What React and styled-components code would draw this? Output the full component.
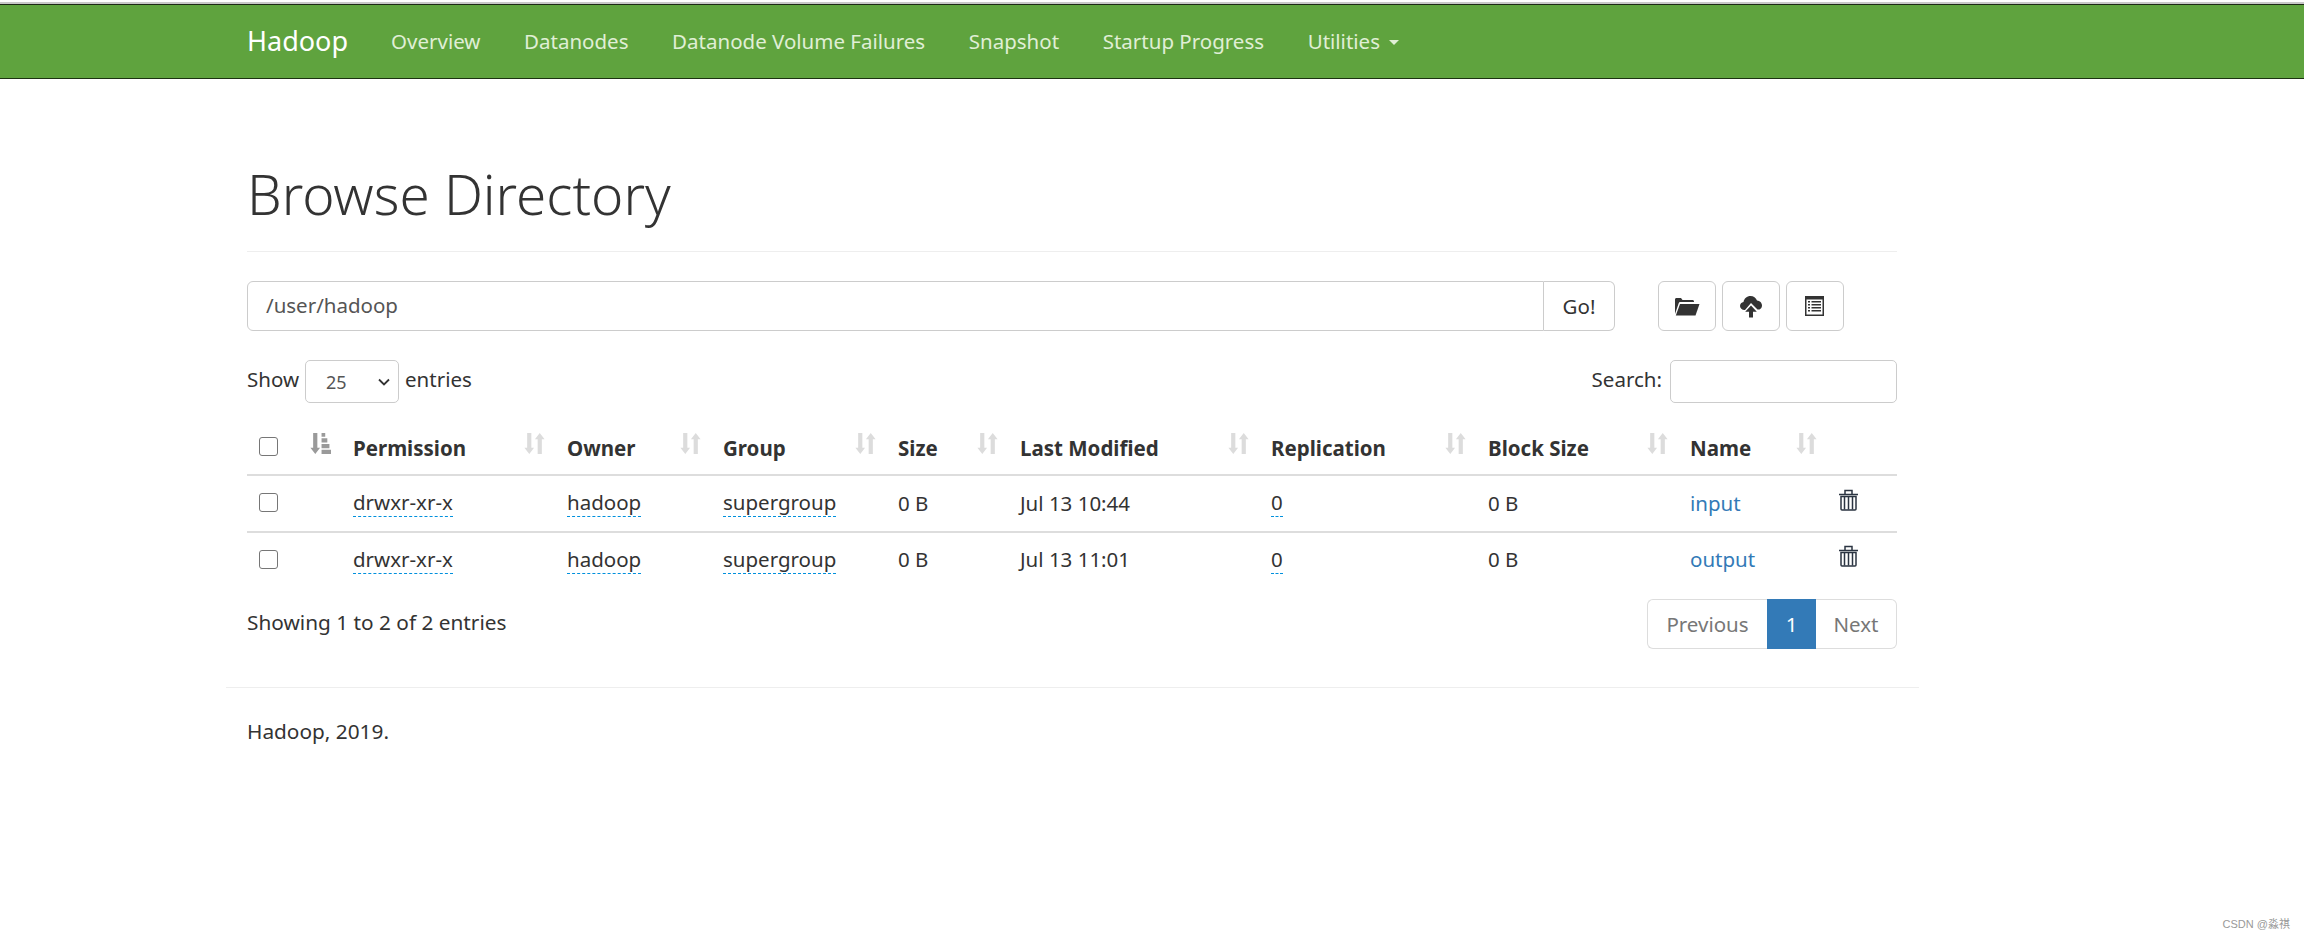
import React from 'react';
import styled, { createGlobalStyle } from 'styled-components';

const Global = createGlobalStyle`
  html, body { margin: 0; padding: 0; background: #fff; height: 100%; overflow: hidden; }
  body { font-family: "Noto Sans", "Open Sans", sans-serif; font-size: 20.500px; color: #333; }
  * { box-sizing: border-box; }
`;
const Page = styled.div`height: 939px; padding-top: 2px; position: relative;`;
const Navbar = styled.nav`
  height: 77px; background: #5fa33e; border-top: 2px solid #c8c8c8; position: relative;
  display: flex; align-items: stretch; padding-left: 247px;
  box-shadow: inset 0 1px 0 #1c2a14; border-bottom: 1px solid #1d3312;
`;
const Brand = styled.a`color: #fff; font-size: 27px; line-height: 74px; margin-right: 43px;`;
const NavLink = styled.a`
  color: #e0efd6; font-size: 20.500px; line-height: 72px; margin-right: 43.600px; display: flex; align-items: center; white-space: nowrap;
`;
const Caret = styled.span`
  display: inline-block; margin-left: 9px; margin-top: 3px; border-top: 5px solid #e0efd6;
  border-left: 5px solid transparent; border-right: 5px solid transparent;
`;
const Container = styled.main`margin-left: 226px; width: 1693px; padding: 0 22px 0 21px;`;
const Header = styled.div`height: 173px; border-bottom: 1px solid #eee; padding-top: 79px;`;
const Title = styled.h1`margin: 0; font-size: 54.800px; line-height: 72px; font-weight: 350; color: #333;`;
const Toolbar = styled.div`display: flex; margin-top: 29px; height: 50px;`;
const PathInput = styled.div`
  width: 1297px; height: 50px; border: 1.5px solid #ccc; border-radius: 6px 0 0 6px; padding-left: 18px;
  line-height: 47px; color: #555; font-size: 20.500px;
`;
const GoButton = styled.button`
  width: 71px; height: 50px; border: 1.5px solid #ccc; border-left: 0; border-radius: 0 6px 6px 0;
  background: #fff; font: inherit; color: #333; padding: 0;
`;
const IconButtons = styled.div`display: flex; gap: 6px; margin-left: 43px;`;
const IconButton = styled.button`
  width: 58px; height: 50px; border: 1.5px solid #ccc; border-radius: 6px; background: #fff; padding: 0;
  display: flex; align-items: center; justify-content: center;
`;
const Controls = styled.div`display: flex; justify-content: space-between; align-items: center; margin-top: 29px; height: 43px;`;
const Inline = styled.label`display: flex; align-items: center; gap: 6px; font-size: 20.500px; line-height: 24px; color: #333;`;
const InlineText = styled.span`margin-top: -5px;`;
const SelectBox = styled.div`
  width: 94px; height: 43px; border: 1.5px solid #ccc; border-radius: 5px; display: flex; align-items: center;
  justify-content: space-between; padding: 0 8px 0 20px; font-size: 18px; color: #555;
`;
const SearchBox = styled.div`width: 227px; height: 43px; border: 1.5px solid #ccc; border-radius: 5px; margin-left: 2px;`;
const Table = styled.table`width: 1650px; table-layout: fixed; border-collapse: collapse; margin-top: 16px;`;
const Col = styled.col`width: ${p => p.$w}px;`;
const Th = styled.th`
  height: 56px; border-bottom: 2px solid #ddd; padding: 13px 10.500px 0 12px; text-align: left; font-size: 20.500px; font-weight: 700; color: #333;
  vertical-align: top;
`;
const ThInner = styled.div`display: flex; justify-content: space-between; align-items: flex-start; line-height: 32px; white-space: nowrap;`;
const SortSvg = styled.svg`display: block; margin-top: 1px;`;
const Td = styled.td`
  height: 57px; border-bottom: 2px solid #ddd; padding: 0 12px 2px; font-size: 20.500px; color: #333; white-space: nowrap;
  tr:last-child > & { border-bottom: 0; padding-bottom: 4px; }
`;
const Editable = styled.span`border-bottom: 1.5px dashed #0090dd; display: inline-block; line-height: 27px;`;
const FileLink = styled.a`color: #337ab7;`;
const Check = styled.span`
  display: block; width: 19px; height: 19px; border: 1.5px solid #767676; border-radius: 3px; background: #fff;
`;
const HeadCheck = styled(Check)`margin-top: 5px;`;
const FooterRow = styled.div`display: flex; justify-content: space-between; align-items: flex-start; margin-top: 10px;`;
const Info = styled.div`margin-top: 9px; line-height: 28px; font-size: 20.800px;`;
const Pager = styled.div`display: flex; height: 50px; font-size: 20.500px;`;
const PageItem = styled.span`
  width: ${p => p.$w}px; display: flex; align-items: center; justify-content: center;
  color: ${p => p.$active ? '#fff' : '#777'}; background: ${p => p.$active ? '#337ab7' : '#fff'};
  border: ${p => p.$active ? '0' : '1.5px solid #ddd'};
  ${p => p.$first && 'border-radius: 6px 0 0 6px; border-right: 0;'}
  ${p => p.$last && 'border-radius: 0 6px 6px 0; border-left: 0;'}
`;
const FootRule = styled.hr`margin: 38px -22px 0 -21px; border: 0; border-top: 1.5px solid #eee;`;
const FootText = styled.p`margin: 29px 0 0; line-height: 28px; font-size: 20.800px;`;
const Watermark = styled.span`position: absolute; right: 14px; bottom: 8px; font-size: 11px; color: #999; font-family: "Liberation Sans", "Noto Sans CJK SC", sans-serif;`;
const TrashWrap = styled.svg`display: block; margin-top: -6px;`;

const Sort = ({ active }) => (
  <SortSvg width="21" height="21" viewBox="0 0 20 20" fill={active ? '#9a9a9a' : '#dcdcdc'}>
    {active ? (
      <>
        <path d="M3 0h4v14h2.600L5 20 .4 14H3z" />
        <path d="M11 0h3.500v3.500H11zM11 5h5.500v4H11zM11 10.500h7.500v4H11zM11 16h9v4h-9z" />
      </>
    ) : (
      <>
        <path d="M3 0h4v14h2.600L5 20 .4 14H3z" />
        <path d="M13 20v-14h-2.600L15 0l4.600 6H17v14z" />
      </>
    )}
  </SortSvg>
);
const FolderIcon = () => (
  <svg width="26" height="20" viewBox="0 0 26 20" fill="#333">
    <path d="M1 18V3.500C1 2.600 1.600 2 2.500 2H7l1.500 2H18.500C19.400 4 20 4.600 20 5.500V6H6.500C5.600 6 5 6.500 4.700 7.300Z" />
    <path d="M6 8h19.500L21.500 19.500H1.800Z" />
  </svg>
);
const CloudIcon = () => (
  <svg width="22" height="23" viewBox="0 0 22 23" fill="#333">
    <path d="M5 15H4.500C2 15 0 13.200 0 11c0-2 1.500-3.600 3.500-3.900C4 3.500 7 1 10.500 1c3 0 5.500 1.800 6.500 4.500 2.800.2 5 2.400 5 5 0 1.800-1 3.300-2.500 4H17.500L11 8Z" />
    <path d="M11 10.500 16.800 16.800H13V22.500H9V16.800H5.200Z" />
  </svg>
);
const ListIcon = () => (
  <svg width="20" height="20" viewBox="0 0 20 20">
    <rect x="0" y="0" width="19" height="20" fill="#333" />
    <rect x="1.500" y="3.500" width="16" height="15" fill="#fff" />
    <path fill="#333" d="M3 5h2v1.500H3zM6.500 5H16v1.500H6.500zM3 8h2v1.500H3zM6.500 8H16v1.500H6.500zM3 11h2v1.500H3zM6.500 11H16v1.500H6.500zM3 14h2v1.500H3zM6.500 14H16v1.500H6.500z" />
  </svg>
);
const TrashIcon = () => (
  <TrashWrap width="19" height="22" viewBox="0 0 19 22" fill="none" stroke="#2b3442" strokeWidth="1.500">
    <path d="M0 5.500h19M6 5V1.500h7V5" />
    <path d="M2 7.500h15v12.500a1 1 0 0 1-1 1H3a1 1 0 0 1-1-1z" />
    <path d="M5.500 8v12.500M9.500 8v12.500M13.500 8v12.500" />
  </TrashWrap>
);
const Chevron = () => (
  <svg width="12" height="8" viewBox="0 0 12 8" fill="none" stroke="#333" strokeWidth="1.800"><path d="M1 1.500l5 5 5-5" /></svg>
);

const columns = [
  ['Permission', 214], ['Owner', 156], ['Group', 175], ['Size', 122], ['Last Modified', 251],
  ['Replication', 217], ['Block Size', 202], ['Name', 149],
];
const rows = [
  ['drwxr-xr-x', 'hadoop', 'supergroup', '0 B', 'Jul 13 10:44', '0', '0 B', 'input'],
  ['drwxr-xr-x', 'hadoop', 'supergroup', '0 B', 'Jul 13 11:01', '0', '0 B', 'output'],
];

export default function App() {
  return (
    <Page>
      <Global />
      <Navbar>
        <Brand>Hadoop</Brand>
        {['Overview', 'Datanodes', 'Datanode Volume Failures', 'Snapshot', 'Startup Progress'].map(t => <NavLink key={t}>{t}</NavLink>)}
        <NavLink>Utilities<Caret /></NavLink>
      </Navbar>
      <Container>
        <Header><Title>Browse Directory</Title></Header>
        <Toolbar>
          <PathInput>/user/hadoop</PathInput>
          <GoButton>Go!</GoButton>
          <IconButtons>
            <IconButton><FolderIcon /></IconButton>
            <IconButton><CloudIcon /></IconButton>
            <IconButton><ListIcon /></IconButton>
          </IconButtons>
        </Toolbar>
        <Controls>
          <Inline><InlineText>Show</InlineText> <SelectBox>25<Chevron /></SelectBox> <InlineText>entries</InlineText></Inline>
          <Inline><InlineText>Search:</InlineText> <SearchBox /></Inline>
        </Controls>
        <Table>
          <colgroup>
            <Col $w={51} /><Col $w={43} />
            {columns.map(([n, w]) => <Col key={n} $w={w} />)}
            <Col $w={70} />
          </colgroup>
          <thead>
            <tr>
              <Th><HeadCheck /></Th>
              <Th><Sort active /></Th>
              {columns.map(([n]) => <Th key={n}><ThInner>{n}<Sort /></ThInner></Th>)}
              <Th />
            </tr>
          </thead>
          <tbody>
            {rows.map((r, i) => (
              <tr key={i}>
                <Td><Check /></Td>
                <Td />
                <Td><Editable>{r[0]}</Editable></Td>
                <Td><Editable>{r[1]}</Editable></Td>
                <Td><Editable>{r[2]}</Editable></Td>
                <Td>{r[3]}</Td>
                <Td>{r[4]}</Td>
                <Td><Editable>{r[5]}</Editable></Td>
                <Td>{r[6]}</Td>
                <Td><FileLink>{r[7]}</FileLink></Td>
                <Td><TrashIcon /></Td>
              </tr>
            ))}
          </tbody>
        </Table>
        <FooterRow>
          <Info>Showing 1 to 2 of 2 entries</Info>
          <Pager>
            <PageItem $w={120} $first>Previous</PageItem>
            <PageItem $w={49} $active>1</PageItem>
            <PageItem $w={81} $last>Next</PageItem>
          </Pager>
        </FooterRow>
        <FootRule />
        <FootText>Hadoop, 2019.</FootText>
      </Container>
      <Watermark>CSDN @淼祺</Watermark>
    </Page>
  );
}
